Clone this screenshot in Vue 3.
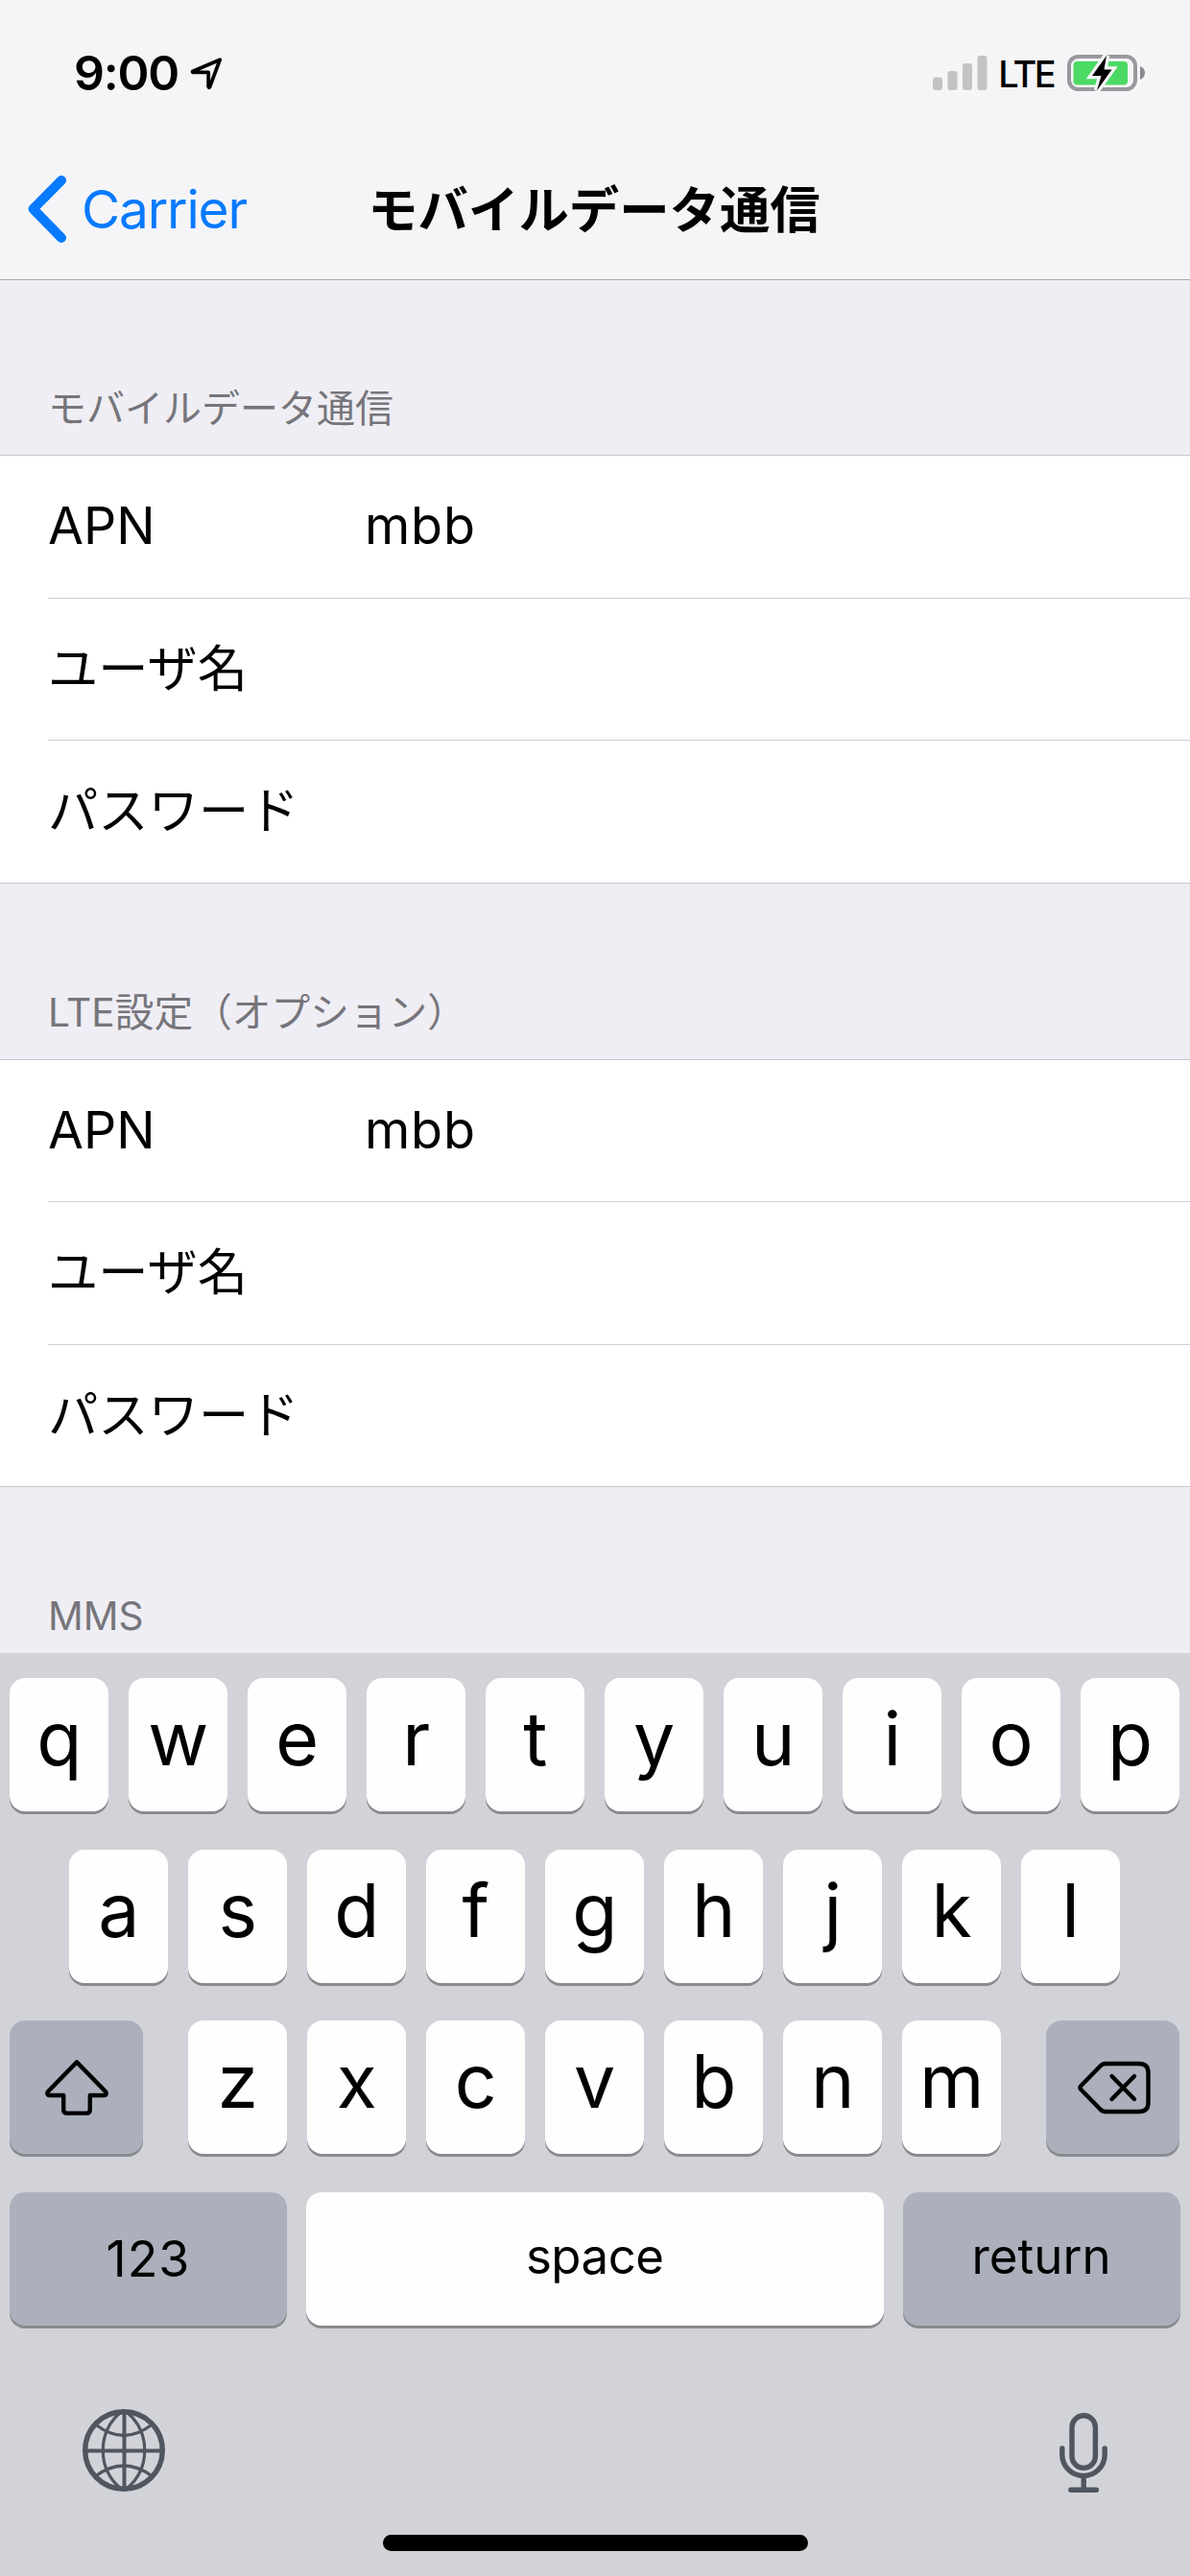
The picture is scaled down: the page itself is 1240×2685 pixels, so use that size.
<template>
  <div class="screen">
    <header class="top">
      <div class="status-bar">
        <span class="time">9:00</span>
        <svg class="location" viewBox="0 0 36 36">
          <path d="M32.2 4.2 4 16.2Q3 17.2 4.2 17.4H20.2V32.4Q20.6 34 21.6 32.6Z" />
        </svg>
        <svg class="signal" viewBox="0 0 57 36">
          <rect x="0" y="22.5" width="10" height="13.5" rx="3" />
          <rect x="15.5" y="16" width="10" height="20" rx="3" />
          <rect x="31" y="8" width="10" height="28" rx="3" />
          <rect x="46.5" y="0" width="10" height="36" rx="3" />
        </svg>
        <span class="network">LTE</span>
        <svg class="battery" viewBox="0 0 82 42">
          <rect x="2" y="4" width="69" height="34" rx="9.5" fill="none" stroke="#99999d" stroke-width="4" />
          <rect x="6.5" y="9" width="56.5" height="24.5" rx="4" fill="#4cd964" />
          <path d="M76 14q5 2.2 5 7t-5 7z" fill="#8a8a8e" />
          <path
            d="M41 3 26 24h9.5L31 39.5 46.5 17.5H38.5Z"
            fill="#000"
            stroke="#f5f5f7"
            stroke-width="6.5"
            paint-order="stroke"
          />
        </svg>
      </div>
      <nav class="nav-bar">
        <a class="back">
          <svg class="chevron" viewBox="0 0 42 72">
            <path d="M36 6 6.5 35.8 36 66" />
          </svg>
          <span>Carrier</span>
        </a>
        <h1 class="title">モバイルデータ通信</h1>
      </nav>
    </header>

    <main class="content">
      <section v-for="section in sections" :key="section.title" class="section">
        <h2 class="section-title">{{ section.title }}</h2>
        <div v-if="section.rows.length" class="group">
          <div v-for="row in section.rows" :key="row.label" class="row">
            <span class="label">{{ row.label }}</span>
            <span class="value">{{ row.value }}</span>
          </div>
        </div>
      </section>
    </main>

    <footer class="keyboard">
      <div class="keys">
        <div class="key-row">
          <button v-for="key in 'qwertyuiop'" :key="key" class="key">{{ key }}</button>
        </div>
        <div class="key-row">
          <button v-for="key in 'asdfghjkl'" :key="key" class="key">{{ key }}</button>
        </div>
        <div class="key-row spread">
          <button class="key dark side" aria-label="shift">
            <svg class="shift" viewBox="0 0 66 58">
              <path d="M33 2.4 2.6 33.5Q1.6 37 4.5 37H19.2V52Q19.2 55.6 22.8 55.6H43.2Q46.8 55.6 46.8 52V37H61.5Q64.4 37 63.4 33.5Z" />
            </svg>
          </button>
          <div class="key-row">
            <button v-for="key in 'zxcvbnm'" :key="key" class="key">{{ key }}</button>
          </div>
          <button class="key dark side" aria-label="delete">
            <svg class="delete" viewBox="0 0 76 56">
              <path d="M29 3H64Q73.5 3 73.5 12.5V43.5Q73.5 53 64 53H29Q25.5 53 23 50L3.4 30Q1.6 28 3.4 26L23 6Q25.5 3 29 3Z" />
              <path d="M35.5 16 59 40M59 16 35.5 40" />
            </svg>
          </button>
        </div>
        <div class="key-row bottom">
          <button class="key dark word num">123</button>
          <button class="key word space">space</button>
          <button class="key dark word return">return</button>
        </div>
      </div>
      <div class="tools">
        <svg class="globe" viewBox="0 0 86 86">
          <circle cx="43" cy="43" r="40.3" stroke-width="5.4" />
          <path d="M43.5 3V83M3 43.5H83" stroke-width="4" />
          <path d="M40 3C15 24 15 62 40 83M46 3C71 24 71 62 46 83" stroke-width="3.2" />
          <path d="M13.5 16Q43 39 72.5 16M13.5 70Q43 48 72.5 70" stroke-width="3.2" />
        </svg>
        <svg class="mic" viewBox="0 0 50 83">
          <rect x="13" y="2.8" width="24.4" height="54.6" rx="12.2" />
          <path d="M2.8 37V43.5a22.2 22.2 0 0 0 44.4 0V37M25.2 66V80M11.8 80.2H38.4" />
        </svg>
      </div>
      <div class="home-indicator"></div>
    </footer>
  </div>
</template>

<script setup>
const sections = [
  {
    title: 'モバイルデータ通信',
    rows: [
      { label: 'APN', value: 'mbb' },
      { label: 'ユーザ名', value: '' },
      { label: 'パスワード', value: '' }
    ]
  },
  {
    title: 'LTE設定（オプション）',
    rows: [
      { label: 'APN', value: 'mbb' },
      { label: 'ユーザ名', value: '' },
      { label: 'パスワード', value: '' }
    ]
  },
  { title: 'MMS', rows: [] }
];
</script>

<style>
body {
  margin: 0;
}
</style>

<style scoped>
.screen {
  width: 1240px;
  height: 2685px;
  display: flex;
  flex-direction: column;
  overflow: hidden;
  background: #efeef4;
  color: #000;
  font-family: Inter, 'Noto Sans CJK JP', sans-serif;
}

.top {
  box-sizing: border-box;
  height: 292px;
  flex: none;
  background: #f5f5f7;
  border-bottom: 1px solid #a8a7ac;
}

.status-bar {
  display: flex;
  align-items: center;
  height: 152px;
  padding: 0 46px 0 77px;
}

.time {
  font-size: 50px;
  font-weight: 600;
  line-height: 60px;
  letter-spacing: -1.2px;
}

.location {
  width: 36px;
  height: 36px;
  margin-left: 11px;
  fill: none;
  stroke: #000;
  stroke-width: 3.8;
  stroke-linejoin: round;
}

.signal {
  width: 57px;
  height: 36px;
  margin-left: auto;
  fill: #c3c3c5;
}

.network {
  margin: 2px 0 0 11px;
  font-size: 38px;
  font-weight: 500;
  line-height: 44px;
  letter-spacing: -2.6px;
}

.battery {
  width: 82px;
  height: 42px;
  margin-left: 14px;
}

.nav-bar {
  display: grid;
  grid-template-columns: 1fr auto 1fr;
  align-items: center;
  height: 134px;
}

.back {
  display: flex;
  align-items: center;
  padding-left: 28px;
  margin-top: -2px;
  color: #087aff;
  font-size: 55px;
  line-height: 66px;
  letter-spacing: -1.2px;
}

.chevron {
  width: 42px;
  height: 72px;
  margin-right: 15px;
  fill: none;
  stroke: #087aff;
  stroke-width: 10;
  stroke-linecap: round;
  stroke-linejoin: round;
}

.title {
  margin: 0 0 0 -2px;
  font-size: 52.4px;
  font-weight: 700;
  line-height: 66px;
}

.content {
  height: 1431px;
  flex: none;
  overflow: hidden;
}

.section-title {
  box-sizing: border-box;
  height: 183px;
  margin: 0;
  padding: 110px 50px 0;
  color: #76757b;
  font-size: 40.7px;
  font-weight: 400;
  line-height: 50px;
}

.section:first-child .section-title {
  height: 182px;
  padding-top: 109px;
  font-size: 40px;
}

.group {
  background: #fff;
  border-top: 1px solid #c8c7cc;
}

.row {
  box-sizing: border-box;
  display: flex;
  align-items: center;
  height: 148.5px;
  margin-left: 50px;
  padding-bottom: 1px;
  border-bottom: 1px solid #cfced2;
  font-size: 52.3px;
  line-height: 66px;
}

.row:first-child {
  font-size: 53.6px;
}

.row:last-child {
  margin-left: 0;
  padding-left: 50px;
  border-color: #c8c7cc;
}

.label {
  width: 330px;
}

.value {
  font-size: 54px;
  letter-spacing: 0.8px;
}

.keyboard {
  flex: 1;
  background: #d1d3d9;
}

.keys {
  display: flex;
  flex-direction: column;
  gap: 39.6px;
  padding: 26px 10.5px 0 10px;
}

.key-row {
  display: flex;
  justify-content: center;
  gap: 20.7px;
}

.spread {
  justify-content: space-between;
}

.key {
  box-sizing: border-box;
  display: flex;
  align-items: center;
  justify-content: center;
  width: 103.3px;
  height: 139px;
  flex: none;
  margin: 0;
  padding: 0 0 13px;
  border: 0;
  border-radius: 16px;
  background: #fefefe;
  box-shadow: 0 3px 0 #898a8e;
  color: #000;
  font-family: inherit;
  font-size: 77px;
  font-weight: 400;
  line-height: 90px;
}

.dark {
  background: #abb0bc;
}

.side {
  width: 139px;
  padding: 0;
}

.bottom {
  gap: 0;
  justify-content: space-between;
}

.word {
  padding-bottom: 4px;
  font-size: 51px;
}

.num {
  width: 289px;
  padding-bottom: 0;
  padding-top: 2px;
  font-size: 52px;
  letter-spacing: 1px;
}

.space {
  width: 602px;
  letter-spacing: -0.5px;
}

.return {
  width: 289px;
}

.shift {
  width: 66px;
  height: 58px;
  fill: none;
  stroke: #000;
  stroke-width: 4.4;
  stroke-linejoin: round;
}

.delete {
  width: 76px;
  height: 56px;
  margin-left: 2px;
  fill: none;
  stroke: #000;
  stroke-width: 4.4;
  stroke-linecap: round;
  stroke-linejoin: round;
}

.tools {
  display: flex;
  justify-content: space-between;
  align-items: center;
  height: 88px;
  padding: 86px 86px 0;
}

.globe {
  width: 86px;
  height: 86px;
  fill: none;
  stroke: #50565f;
}

.mic {
  width: 50px;
  height: 83px;
  margin-top: 6px;
  fill: none;
  stroke: #50565f;
  stroke-width: 5.4;
  stroke-linecap: round;
}

.home-indicator {
  width: 443px;
  height: 17px;
  margin: 44px auto 0;
  border-radius: 9px;
  background: #000;
}
</style>
